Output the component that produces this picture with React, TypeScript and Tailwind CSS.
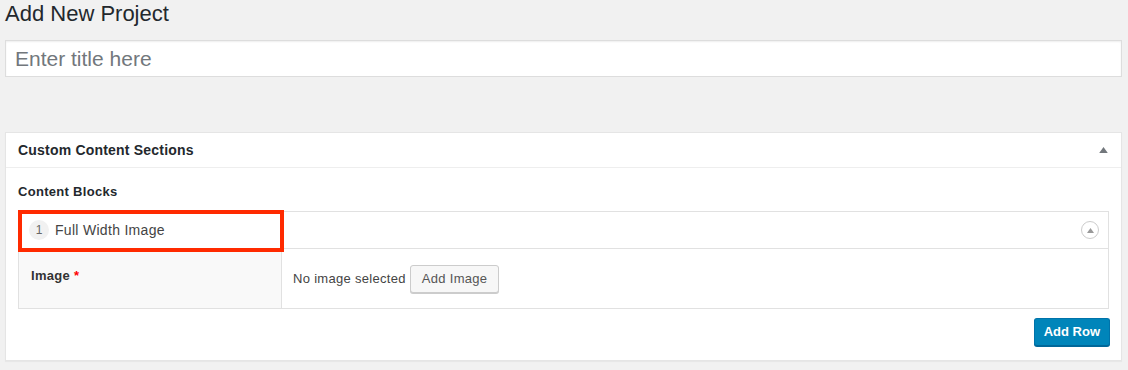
import React from 'react'

// Small triangle used for the collapse toggles
function Caret({ className = '' }: { className?: string }) {
  return (
    <svg viewBox="0 0 10 7" className={className} fill="currentColor">
      <path d="M5 0 L10 7 L0 7 Z" />
    </svg>
  )
}

export default function App() {
  return (
    <div
      className="min-h-[370px] bg-[#f1f1f1] pl-[5px] pr-[6px] text-[13px] text-[#444] tracking-[0.3px]"
      style={{ fontFamily: '"Liberation Sans", Arial, sans-serif' }}
    >
      {/* Titre */}
      <h1 className="text-[22px] leading-[27px] font-normal text-[#23282d] tracking-normal">Add New Project</h1>

      {/* Champ titre */}
      <div className="mt-[13px] h-[37px] border border-[#ddd] bg-white shadow-[inset_0_1px_2px_rgba(0,0,0,0.07)] flex items-center pl-[9px]">
        <input
          type="text"
          placeholder="Enter title here"
          className="w-full bg-transparent text-[21px] tracking-normal outline-none placeholder:text-[#72777c]"
        />
      </div>

      {/* Postbox */}
      <div className="mt-[55px] border border-[#e5e5e5] bg-white shadow-[0_1px_1px_rgba(0,0,0,0.04)]">
        <div className="h-[35px] border-b border-[#eee] flex items-center justify-between pl-3 pr-[13px]">
          <h2 className="text-[14px] font-bold text-[#23282d] tracking-[0.2px]">Custom Content Sections</h2>
          <Caret className="w-[9px] h-[6px] text-[#72777c]" />
        </div>

        <div className="px-3 pt-[15px] pb-[14px]">
          <p className="text-[13px] leading-[18px] font-bold text-[#23282d]">Content Blocks</p>

          {/* Table du layout */}
          <div className="relative mt-[10px] border border-[#e1e1e1]">
            <div className="h-[37px] border-b border-[#e1e1e1] flex items-center justify-between pl-[10px] pr-[9px]">
              <div className="flex items-center">
                <span className="w-5 h-5 rounded-full bg-[#f1f1f1] text-[#666] text-[12px] leading-5 text-center tracking-normal">1</span>
                <span className="ml-[6px] text-[14px] text-[#444]">Full Width Image</span>
              </div>
              <span className="w-[18px] h-[18px] rounded-full border border-[#ccc] flex items-center justify-center">
                <Caret className="w-[7px] h-[5px] text-[#999]" />
              </span>
            </div>

            <div className="flex">
              <div className="w-[263px] bg-[#f9f9f9] border-r border-[#e1e1e1] px-3 pt-[17px] pb-[15px]">
                <span className="font-bold text-[#333] leading-[18px]">
                  Image <span className="text-[#f00]">*</span>
                </span>
              </div>
              <div className="flex-1 flex items-center pl-[11px] pr-[10px] pt-[16px] pb-[15px]">
                <span className="text-[#444]">No image selected</span>
                <button className="ml-1 h-7 px-[11px] rounded-[3px] border border-[#ccc] bg-[#f7f7f7] text-[#555] shadow-[0_1px_0_#ccc]">
                  Add Image
                </button>
              </div>
            </div>

            {/* Annotation rouge */}
            <div className="absolute -left-[1px] -top-[2px] w-[266px] h-[42px] border-4 border-[#ff2a00]" />
          </div>

          <div className="mt-[9px] flex justify-end -mr-px">
            <button className="h-7 px-[9px] rounded-[3px] border border-[#0073aa] border-b-[#006799] bg-[#0085ba] text-white font-bold tracking-normal shadow-[0_1px_0_#006799]">
              Add Row
            </button>
          </div>
        </div>
      </div>
    </div>
  )
}
